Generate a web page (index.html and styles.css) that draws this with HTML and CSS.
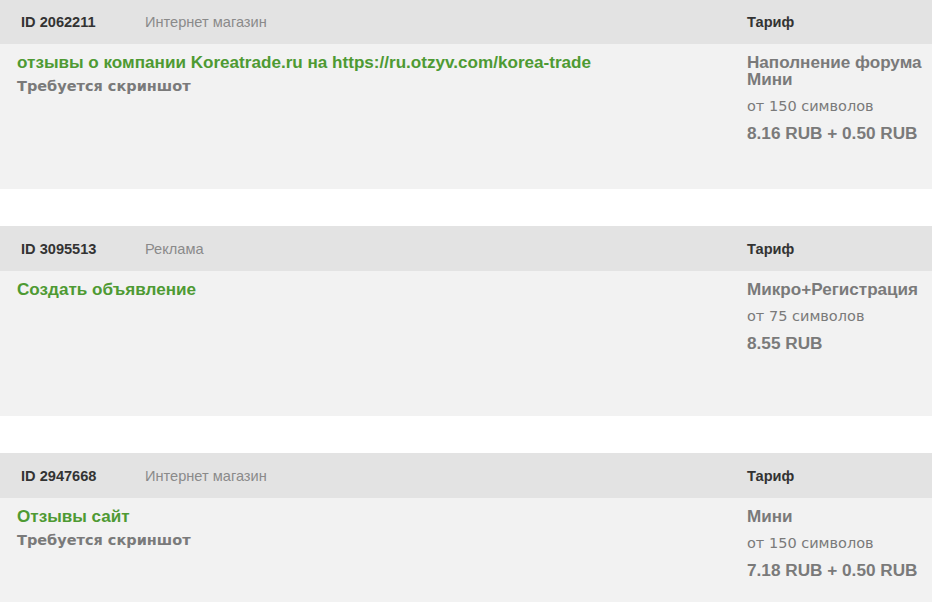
FILE: index.html
```html
<!DOCTYPE html>
<html lang="ru">
<head>
<meta charset="utf-8">
<link rel="stylesheet" href="styles.css">
</head>
<body>
<div class="list">
  <div class="task">
    <div class="task-head">
      <div class="head-left"><span class="task-id">ID 2062211</span><span class="task-cat">Интернет магазин</span></div>
      <div class="head-right">Тариф</div>
    </div>
    <div class="task-body">
      <div class="body-left">
        <div class="task-title">отзывы о компании Koreatrade.ru на https://ru.otzyv.com/korea-trade</div>
        <div class="task-note">Требуется скриншот</div>
      </div>
      <div class="body-right">
        <div class="tariff-name">Наполнение форума Мини</div>
        <div class="tariff-min">от 150 символов</div>
        <div class="tariff-price">8.16 RUB + 0.50 RUB</div>
      </div>
    </div>
  </div>
  <div class="task">
    <div class="task-head">
      <div class="head-left"><span class="task-id">ID 3095513</span><span class="task-cat">Реклама</span></div>
      <div class="head-right">Тариф</div>
    </div>
    <div class="task-body">
      <div class="body-left">
        <div class="task-title">Создать объявление</div>
      </div>
      <div class="body-right">
        <div class="tariff-name">Микро+Регистрация</div>
        <div class="tariff-min">от 75 символов</div>
        <div class="tariff-price">8.55 RUB</div>
      </div>
    </div>
  </div>
  <div class="task">
    <div class="task-head">
      <div class="head-left"><span class="task-id">ID 2947668</span><span class="task-cat">Интернет магазин</span></div>
      <div class="head-right">Тариф</div>
    </div>
    <div class="task-body">
      <div class="body-left">
        <div class="task-title">Отзывы сайт</div>
        <div class="task-note">Требуется скриншот</div>
      </div>
      <div class="body-right">
        <div class="tariff-name">Мини</div>
        <div class="tariff-min">от 150 символов</div>
        <div class="tariff-price">7.18 RUB + 0.50 RUB</div>
      </div>
    </div>
  </div>
</div>
</body>
</html>
```
FILE: styles.css
```css
html, body {
  margin: 0;
  padding: 0;
  background: #ffffff;
}
body {
  font-family: "Liberation Sans", Arial, sans-serif;
  overflow: hidden;
  height: 602px;
}
.list {
  display: flex;
  flex-direction: column;
  gap: 37px;
  margin-top: -1px;
}
.task-head {
  height: 45px;
  background: #e3e3e3;
  display: flex;
  align-items: center;
}
.head-left {
  flex: 1;
  display: flex;
  align-items: center;
  padding-left: 21px;
}
.task-id {
  width: 124px;
  font-weight: bold;
  font-size: 14.6px;
  color: #333333;
}
.task-cat {
  font-size: 14.6px;
  color: #8a8a8a;
}
.head-right {
  width: 185px;
  font-weight: bold;
  font-size: 14.6px;
  color: #333333;
}
.task-body {
  height: 145px;
  background: #f2f2f2;
  display: flex;
  box-sizing: border-box;
  padding-top: 10px;
}
.body-left {
  flex: 1;
  padding-left: 17px;
}
.task-title {
  font-weight: bold;
  font-size: 17.1px;
  line-height: 18px;
  color: #4e9a33;
}
.task-note {
  margin-top: 6px;
  font-family: "DejaVu Sans", Verdana, sans-serif;
  font-weight: bold;
  font-size: 14.5px;
  line-height: 17px;
  color: #7a7a7a;
}
.body-right {
  width: 185px;
  color: #7a7a7a;
}
.tariff-name {
  font-weight: bold;
  font-size: 17.1px;
  line-height: 17px;
}
.tariff-min {
  margin-top: 10px;
  font-family: "DejaVu Sans", Verdana, sans-serif;
  font-size: 14.5px;
  line-height: 17px;
}
.tariff-price {
  margin-top: 9px;
  font-weight: bold;
  font-size: 17.2px;
  line-height: 18px;
}
```
